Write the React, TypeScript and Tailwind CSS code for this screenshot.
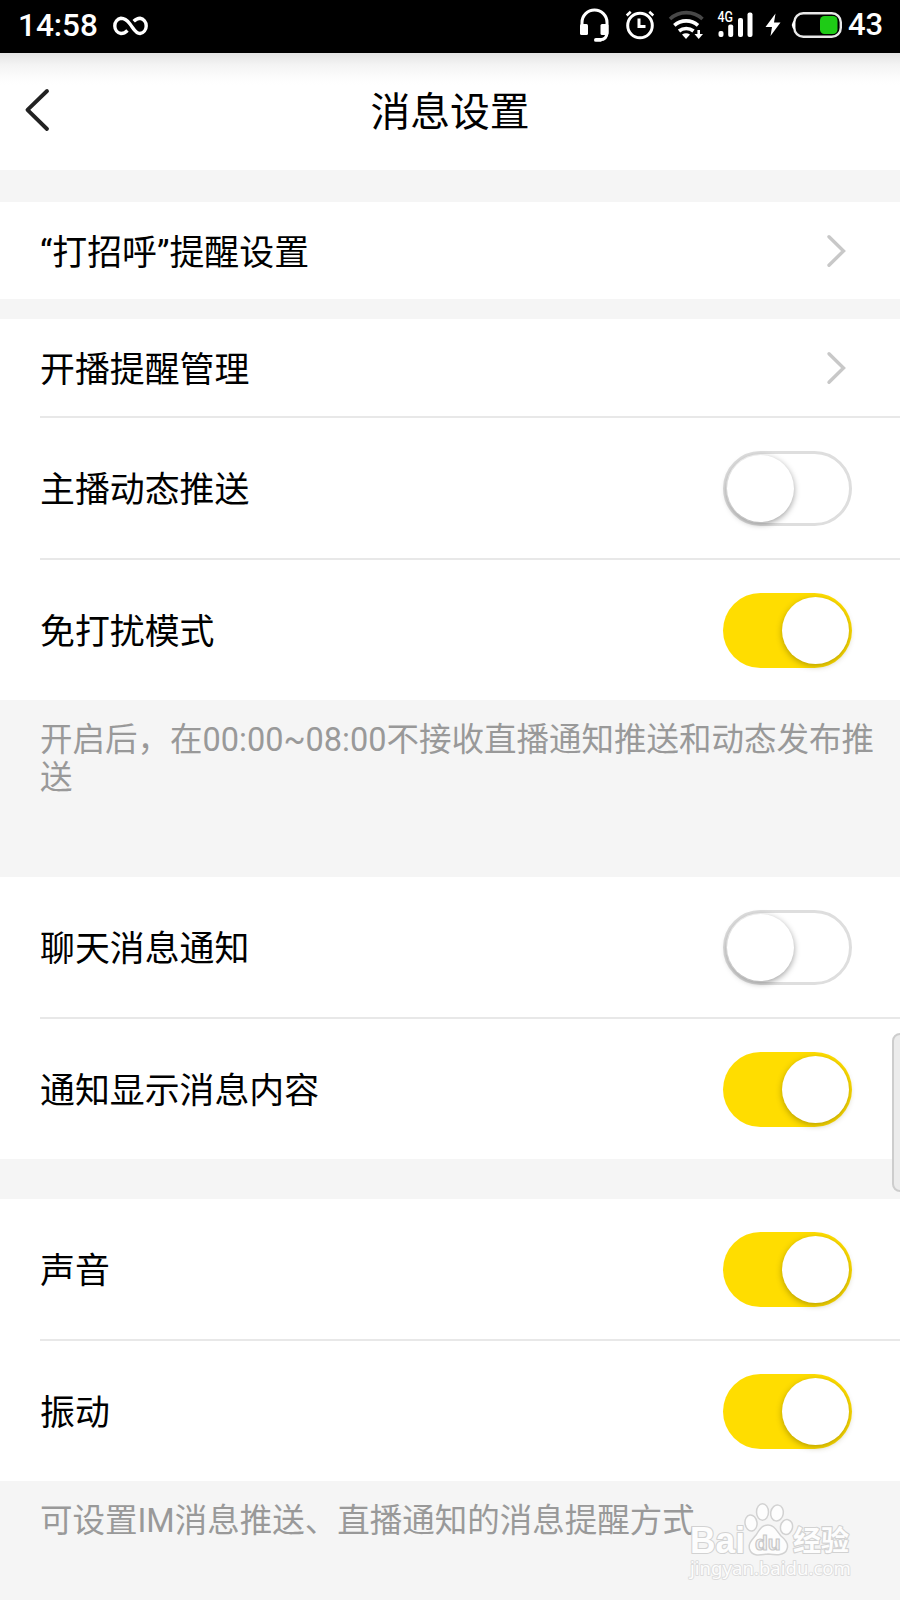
import React from "react";

function StatusBar() {
  return (
    <div className="flex h-[53px] shrink-0 items-start bg-black pl-[18px] font-[Roboto,sans-serif] text-white">
      <span className="w-[93px] pt-[7px] text-[31.500px] leading-[37px] font-medium">14:58</span>
      <svg className="h-[53px] w-[39px]" viewBox="111 0 39 53" fill="none" stroke="#fff" strokeWidth="3.4" strokeLinecap="butt">
        <path d="M127.5 30.5 C125.5 32.5 123.500 33.500 121 33.500 A7.400 7.700 0 0 1 121 18.300 C125 18.300 127.500 20.800 130 24 C133.500 28.500 135.500 33.500 140 33.500 A7.400 7.700 0 0 0 140 18.300 C137.300 18.300 135.500 19.500 133.700 21.300" />
      </svg>
      <div className="grow" />
      <svg className="h-[53px] w-[284px]" viewBox="564 0 284 53" fill="none">
        <path d="M582 26 V22.500 A12.500 12.500 0 0 1 607 22.500 V32 C607 37.500 604.500 39.700 600 39.800" stroke="#fff" strokeWidth="3" />
        <rect x="580" y="24" width="8" height="11" rx="1.500" fill="#fff" />
        <rect x="600.500" y="24" width="8" height="11" rx="1.500" fill="#fff" />
        <rect x="594" y="38" width="8" height="3.800" rx="1.900" fill="#fff" />
        <circle cx="640" cy="25.500" r="12.300" stroke="#fff" strokeWidth="3" />
        <path d="M639 18.500 V26.500 H645.500" stroke="#fff" strokeWidth="3" />
        <path d="M626.700 15.500 L630.700 11.800 M653.300 15.500 L649.300 11.800" stroke="#fff" strokeWidth="2.600" />
        <path d="M670 19 A24 24 0 0 1 702.500 19" stroke="#484848" strokeWidth="3.600" />
        <path d="M674.300 25.300 A18 18 0 0 1 698 25.300" stroke="#fff" strokeWidth="3.600" />
        <path d="M679 31 A11.500 11.500 0 0 1 693.500 31" stroke="#fff" strokeWidth="3.600" />
        <path d="M682 34.500 Q686 31.800 690 34.500 L686 39 Z" fill="#fff" />
        <path d="M698.700 30 V35" stroke="#fff" strokeWidth="2.600" />
        <path d="M694.500 34 H703 L698.700 39 Z" fill="#fff" />
        <text x="717.500" y="22" fill="#fff" fontSize="14" fontFamily="Roboto, sans-serif" fontWeight="500" textLength="15.500" lengthAdjust="spacingAndGlyphs">4G</text>
        <rect x="718.500" y="31" width="5" height="6" rx="2" fill="#fff" />
        <rect x="728.200" y="24.500" width="5" height="12.500" rx="2" fill="#fff" />
        <rect x="738" y="18" width="5" height="19" rx="2" fill="#fff" />
        <rect x="747.500" y="12.500" width="5" height="24.500" rx="2" fill="#fff" />
        <path d="M775.500 13.500 L765.500 27 H772 L770.500 36 L780.500 22.500 H774 Z" fill="#fff" />
        <rect x="794.300" y="13.300" width="46.500" height="23.500" rx="9" stroke="#e8e8e8" strokeWidth="2.400" />
        <path d="M795 19.500 Q788.500 25 795 30.500 Z" fill="#fff" />
        <rect x="820" y="16" width="17.500" height="18" rx="4.500" fill="#1ecb16" />
      </svg>
      <span className="w-[52px] pt-[6px] text-[31px] leading-[37px] font-medium">43</span>
    </div>
  );
}

function Header() {
  return (
    <header className="flex h-[117px] shrink-0 items-start bg-[linear-gradient(#e4e4e4,#f4f4f4_12px,#fdfdfd_26px,#fff_32px)]">
      <svg className="ml-[24px] mt-[34px] h-[46px] w-[28px]" viewBox="24 87 28 46" fill="none" stroke="#222" strokeWidth="3.900" strokeLinecap="round" strokeLinejoin="round">
        <path d="M47 91 L27.500 109.800 L47 129" />
      </svg>
      <h1 className="grow pr-[52px] pt-[31px] text-center text-[39.800px] leading-[58px]">消息设置</h1>
    </header>
  );
}

function Chevron() {
  return (
    <svg className="mr-[53px] h-[34px] w-[22px]" viewBox="0 0 22 34" fill="none" stroke="#c8c8c8" strokeWidth="3.400" strokeLinecap="round" strokeLinejoin="miter">
      <path d="M4 2.800 L18.500 17 L4 31.200" />
    </svg>
  );
}

function Toggle({ on = false }: { on?: boolean }) {
  return on ? (
    <div className="mr-[48px] flex h-[75px] w-[129px] items-center justify-end rounded-full bg-[#ffdd00] pr-[3px]">
      <div className="h-[67px] w-[67px] rounded-full bg-white shadow-[0_2px_6px_rgba(90,80,0,0.45)]" />
    </div>
  ) : (
    <div className="mr-[48px] flex h-[75px] w-[129px] items-center rounded-full border-3 border-[#dedede] bg-white pl-px">
      <div className="h-[67px] w-[67px] shrink-0 rounded-full bg-white shadow-[0_2px_6px_rgba(0,0,0,0.38)]" />
    </div>
  );
}

function Row({ label, link = false, on = false, divided = false }: { label: string; link?: boolean; on?: boolean; divided?: boolean }) {
  return (
    <div className="bg-white pl-[40px]">
      <div className={divided ? "flex items-center justify-between border-b-2 border-[#e8e8e8]" : "flex items-center justify-between"}>
        <span className="pt-[6px] text-[34.900px] leading-[50px]">{label}</span>
        <div className={link ? "flex h-[97px] items-center" : "flex h-[140px] items-center"}>{link ? <Chevron /> : <Toggle on={on} />}</div>
      </div>
    </div>
  );
}

function Watermark() {
  return (
    <svg className="absolute right-[40px] bottom-[12px] h-[90px] w-[180px]" viewBox="680 1498 180 90" fill="#fdfdfd" stroke="#d2d2d2" strokeWidth="1.500" aria-hidden="true">
      <g paintOrder="stroke" strokeLinejoin="round" strokeWidth="2.200">
        <text x="690" y="1553" fontFamily="Liberation Sans, sans-serif" fontWeight="700" fontSize="36" textLength="55" lengthAdjust="spacingAndGlyphs">Bai</text>
        <text x="793" y="1551" fontFamily="Noto Sans CJK SC, sans-serif" fontWeight="700" fontSize="28" textLength="56">经验</text>
        <text x="690" y="1575" fontFamily="Noto Sans, sans-serif" fontSize="18" textLength="161" lengthAdjust="spacingAndGlyphs" stroke="#dcdcdc" strokeWidth="1.800">jingyan.baidu.com</text>
      </g>
      <ellipse cx="751" cy="1523" rx="6" ry="8" transform="rotate(-8 751 1523)" />
      <ellipse cx="762.500" cy="1512" rx="6" ry="8.300" />
      <ellipse cx="777" cy="1513" rx="6.300" ry="8" transform="rotate(10 777 1513)" />
      <ellipse cx="786.500" cy="1527" rx="6" ry="7.500" transform="rotate(12 786.500 1527)" />
      <path d="M768 1525 C774 1525 776 1530 781 1536 C786 1540 789 1544 787 1549 C785 1556 776 1555 768 1554 C760 1555 752 1557 749.500 1549 C748 1543 752 1540 756 1535 C760 1529 762 1525 768 1525 Z" />
      <text x="755" y="1550" fontFamily="Liberation Sans, sans-serif" fontWeight="700" fontSize="21" fill="#f4f4f4" stroke="#c8c8c8" strokeWidth="1.200">du</text>
    </svg>
  );
}

export default function App() {
  return (
    <div className="relative flex h-[1600px] w-[900px] flex-col overflow-hidden bg-[#f5f5f5] font-[Roboto,'Noto_Sans_CJK_SC',sans-serif] text-black">
      <StatusBar />
      <Header />
      <main className="flex flex-col">
        <section className="mt-[32px]">
          <Row label="“打招呼”提醒设置" link />
        </section>
        <section className="mt-[20px]">
          <Row label="开播提醒管理" link divided />
          <Row label="主播动态推送" divided />
          <Row label="免打扰模式" on />
        </section>
        <p className="h-[177px] pl-[40px] pr-[20px] pt-[21px] text-[32.500px] leading-[38px] text-[#999]">
          开启后，在00:00~08:00不接收直播通知推送和动态发布推送
        </p>
        <section>
          <Row label="聊天消息通知" divided />
          <Row label="通知显示消息内容" on />
        </section>
        <section className="mt-[40px]">
          <Row label="声音" on divided />
          <Row label="振动" on />
        </section>
        <p className="pl-[40px] pt-[21px] text-[32.500px] leading-[38px] text-[#999]">可设置IM消息推送、直播通知的消息提醒方式</p>
      </main>
      <div className="absolute top-[1033px] -right-[12px] h-[159px] w-[20px] rounded-[8px] border-2 border-[#cdcdcd] bg-[#ececec]" />
      <Watermark />
    </div>
  );
}
